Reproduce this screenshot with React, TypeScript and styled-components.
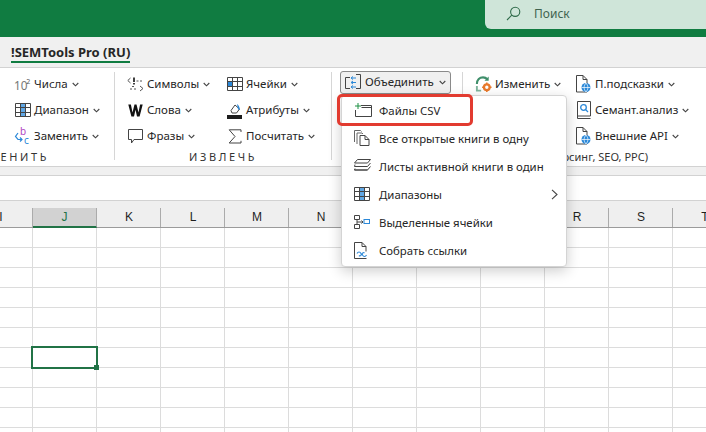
import React from "react";
import styled, { createGlobalStyle } from "styled-components";

const GlobalStyle = createGlobalStyle`
    html, body {
        margin: 0;
        padding: 0;
        background: #fff;
        overflow: hidden;
    }
    body {
        font-family: "Noto Sans", "Open Sans", sans-serif;
        color: #262626;
    }
`;

const Page = styled.div`
    position: relative;
    width: 706px;
    height: 432px;
    overflow: hidden;
    display: flex;
    flex-direction: column;
`;

const TitleBar = styled.div`
    height: 37px;
    flex: none;
    background: #107c41;
    display: flex;
    justify-content: flex-end;
    align-items: flex-start;
`;

const SearchBox = styled.div`
    width: 221px;
    height: 29px;
    background: #cfe5d9;
    border-bottom-left-radius: 6px;
    display: flex;
    align-items: center;
    gap: 13px;
    padding: 0 0 2px 21px;
    box-sizing: border-box;
    font-size: 12px;
    color: #41634f;
`;

const TabBar = styled.div`
    height: 31px;
    flex: none;
    box-sizing: border-box;
    background: #f0f0f0;
    border-bottom: 1px solid #d2d2d2;
    padding-left: 11px;
    display: flex;
`;

const Tab = styled.div`
    height: 24px;
    line-height: 30px;
    font-size: 13px;
    font-weight: 700;
    color: #262626;
    border-bottom: 2px solid #107c41;
    white-space: nowrap;
`;

const Ribbon = styled.div`
    height: 98px;
    flex: none;
    background: #fff;
    display: flex;
    box-sizing: border-box;
    padding-top: 3px;
`;

const Group = styled.div<{ $width: number; $pad: number }>`
    width: ${(p) => p.$width}px;
    flex: none;
    padding-left: ${(p) => p.$pad}px;
    box-sizing: border-box;
    display: flex;
    flex-direction: column;
    overflow: hidden;
`;

const Columns = styled.div`
    height: 78px;
    flex: none;
    display: flex;
`;

const Column = styled.div<{ $width: number }>`
    width: ${(p) => p.$width}px;
    flex: none;
    display: flex;
    flex-direction: column;
`;

const Separator = styled.div`
    width: 1px;
    height: 88px;
    margin-top: 1px;
    flex: none;
    background: #d6d6d6;
`;

const Item = styled.div`
    height: 26px;
    display: flex;
    align-items: center;
    gap: 3px;
    font-size: 11.5px;
    white-space: nowrap;
    color: #262626;
`;

const ItemText = styled.span`
    margin-top: -2px;
`;

const PressedItem = styled(Item)`
    width: 111px;
    height: 23px;
    box-sizing: border-box;
    padding-left: 3px;
    gap: 4px;
    background: #f0f0f0;
    border: 1px solid #8a8a8a;
    border-radius: 3px;
`;

const IconBox = styled.span`
    width: 17px;
    height: 18px;
    flex: none;
    display: flex;
    align-items: center;
    justify-content: center;
`;

const Caret = styled.svg`
    width: 7px;
    height: 5px;
    margin-left: 1px;
    flex: none;
`;

const GroupLabel = styled.div<{ $align: "center" | "end"; $inset?: number }>`
    height: 16px;
    line-height: 16px;
    padding-right: ${(p) => p.$inset ?? 0}px;
    display: flex;
    justify-content: ${(p) => p.$align};
    font-size: 11px;
    white-space: nowrap;
    color: #333;
`;

const Spaced = styled.span`
    letter-spacing: 2.6px;
`;

const StatusStrip = styled.div`
    height: 10px;
    flex: none;
    box-sizing: border-box;
    background: #f0f0f0;
    border-top: 1px solid #d2d2d2;
    border-bottom: 1px solid #d2d2d2;
`;

const FormulaBar = styled.div`
    height: 25px;
    flex: none;
    box-sizing: border-box;
    background: #fff;
    border-bottom: 1px solid #d2d2d2;
`;

const Sheet = styled.div`
    margin-left: -31px;
    display: flex;
    flex-direction: column;
`;

const HeaderRow = styled.div`
    height: 27px;
    flex: none;
    box-sizing: border-box;
    padding-top: 7px;
    background: #efefef;
    border-bottom: 1px solid #9b9b9b;
    display: flex;
`;

const HeaderCell = styled.div<{ $active?: boolean }>`
    width: 64px;
    flex: none;
    box-sizing: border-box;
    height: ${(p) => (p.$active ? 20 : 19)}px;
    padding-left: ${(p) => (p.$active ? 0 : 1)}px;
    text-align: center;
    font-family: "Liberation Sans", Arial, sans-serif;
    font-size: 12px;
    line-height: 19px;
    color: ${(p) => (p.$active ? "#217346" : "#1f1f1f")};
    background: ${(p) => (p.$active ? "#d2d2d2" : "transparent")};
    border-right: 1px solid #ababab;
    border-bottom: ${(p) => (p.$active ? "2px solid #217346" : "none")};
    overflow: hidden;
    white-space: nowrap;
`;

const SheetRow = styled.div`
    display: flex;
    flex: none;
    height: 20px;
`;

const Cell = styled.div<{ $selected?: boolean }>`
    position: relative;
    width: 64px;
    height: 20px;
    flex: none;
    box-sizing: border-box;
    border-right: 1px solid #dcdcdc;
    border-bottom: 1px solid #dcdcdc;

    ${(p) =>
        p.$selected &&
        `
        &::before {
            content: "";
            position: absolute;
            z-index: 2;
            left: -2px;
            top: -2px;
            width: 67px;
            height: 23px;
            box-sizing: border-box;
            border: 2px solid #217346;
        }
        &::after {
            content: "";
            position: absolute;
            z-index: 3;
            right: -3px;
            bottom: -3px;
            width: 5px;
            height: 5px;
            background: #217346;
        }
    `}
`;

const Menu = styled.div`
    position: absolute;
    z-index: 5;
    left: 341px;
    top: 95px;
    width: 226px;
    height: 172px;
    box-sizing: border-box;
    background: #fff;
    border: 1px solid #d4d4d4;
    border-radius: 4px;
    box-shadow: 0 4px 14px rgba(0, 0, 0, 0.2);
`;

const MenuRow = styled.div`
    position: relative;
    height: 28px;
    display: flex;
    align-items: center;
    font-size: 11.4px;
    color: #262626;
    white-space: nowrap;
`;

const MenuIcon = styled.span`
    width: 37px;
    padding-left: 12px;
    box-sizing: border-box;
    flex: none;
    display: flex;
    align-items: center;
`;

const Arrow = styled.svg`
    position: absolute;
    right: 8px;
    top: 9px;
    width: 7px;
    height: 11px;
`;

const Highlight = styled.div`
    position: absolute;
    left: -5px;
    top: -2px;
    width: 136px;
    height: 32px;
    box-sizing: border-box;
    border: 3px solid #e23b30;
    border-radius: 5px;
`;

const Chevron = () => (
    <Caret viewBox="0 0 7 5">
        <path d="M.7 1 3.5 3.8 6.3 1" fill="none" stroke="#444" strokeWidth="1.1" />
    </Caret>
);

const ink = "#444";
const blue = "#2b88d8";

const SearchIcon = () => (
    <svg width="15" height="15" viewBox="0 0 15 15" fill="none" stroke="#2f6b4a" strokeWidth="1.1">
        <circle cx="9.2" cy="5.8" r="4.6" />
        <path d="M5.8 9.2 1 14" />
    </svg>
);

const PowerIcon = () => (
    <svg width="18" height="18" viewBox="0 0 18 18">
        <text x="0" y="15" fontSize="12.5" fontFamily="Noto Sans" fill="#777">10</text>
        <text x="13" y="9" fontSize="7.5" fontFamily="Noto Sans" fill="#555">2</text>
    </svg>
);

const GridIcon = ({ fill }: { fill: string }) => (
    <svg width="16" height="14" viewBox="0 0 16 14">
        {fill === "column" && <rect x="5.5" y=".5" width="5" height="13" fill="#62a8e5" />}
        {fill === "corner" && <rect x=".5" y="4.5" width="5" height="5" fill={blue} />}
        <path
            d="M.5.5h15v13H.5zM5.5.5v13M10.5.5v13M.5 4.5h15M.5 9.5h15"
            fill="none"
            stroke="#444"
        />
    </svg>
);

const ReplaceIcon = () => (
    <svg width="17" height="20" viewBox="0 0 17 20">
        <text x="6" y="9" fontSize="10" fontFamily="Noto Sans" fill="#b146c2">b</text>
        <text x="10" y="18" fontSize="10" fontFamily="Noto Sans" fill={blue}>c</text>
        <path d="M4 7 1.500 10.500 4 13.500h4M6 11.500l2 2-2 2" fill="none" stroke={blue} strokeWidth="1.2" />
    </svg>
);

const SymbolsIcon = () => (
    <svg width="17" height="15" viewBox="0 0 17 15" fill="none" stroke="#555">
        <path d="M3.5 1 .8 3.5l2.7 2.5M13 9l3 2.5L13 14" />
        <path d="M7 .5v4.5" stroke="#111" strokeWidth="1.6" />
        <path d="M7 6v1.4" stroke="#111" strokeWidth="1.6" />
        <path d="M9.5 4h2M13 4h3M5 9.5h2M3 12h2M7 12h2" strokeDasharray="2 1" />
    </svg>
);

const WordIcon = () => (
    <svg width="15" height="13" viewBox="0 0 15 13">
        <path d="M.3.5h2.6l1.6 8 2-8h2l2 8 1.6-8h2.6L11.6 12.5H9L7.5 5.8 6 12.5H3.4z" fill="#111" />
    </svg>
);

const PhraseIcon = () => (
    <svg width="15" height="15" viewBox="0 0 15 15" fill="none" stroke="#444">
        <path d="M.5.5h14v10H6L3.5 14v-3.500H.5z" />
    </svg>
);

const FillIcon = () => (
    <svg width="17" height="17" viewBox="0 0 17 17">
        <path d="M5 8.500 9 3l4.500 4-3 4H6z" fill="#fff" stroke="#444" />
        <path d="M11 2c1.800 1 2.500 3 3 5.500h-2z" fill={blue} />
        <rect x="1" y="13" width="15" height="4" fill="#1c1c1c" />
    </svg>
);

const SumIcon = () => (
    <svg width="14" height="15" viewBox="0 0 14 15" fill="none" stroke="#444">
        <path d="M13 3V.8H1.200L7 7.500 1.200 14H13v-2.200" />
    </svg>
);

const MergeIcon = () => (
    <svg width="16" height="17" viewBox="0 0 16 17" fill="none" stroke="#444">
        <path d="M5 3.500H.5v11H5M11 .5h4.500v14H11" />
        <path d="M11 4H6.500M11 8.500H6.500M11 13H6.500M8 2.500 6 4l2 1.500M8 7 6 8.500l2 1.500M8 11.500 6 13l2 1.500" stroke={blue} />
    </svg>
);

const ChangeIcon = () => (
    <svg width="18" height="18" viewBox="0 0 18 18" fill="none">
        <path d="M2 9C2 4.500 5 2 8.500 2c2 0 3.500.8 4.500 2" stroke="#3f8f6b" strokeWidth="2.200" />
        <path d="M14.500 1v4.500H10z" fill="#3f8f6b" />
        <path d="M2 11v5h4.500" stroke="#7fb59d" strokeWidth="2" />
        <circle cx="12.500" cy="12.500" r="3" stroke="#e8792b" strokeWidth="2.400" />
        <path d="M12.500 7.500v2M12.500 15.500v2M7.500 12.500h2M15.500 12.500h2" stroke="#e8792b" strokeWidth="1.600" />
    </svg>
);

const DocGlobeIcon = () => (
    <svg width="15" height="18" viewBox="0 0 15 18">
        <path d="M.5.5h6.500l4 4v12.500H.5zM7 .5v4h4" fill="#fff" stroke="#444" />
        <circle cx="10" cy="12.500" r="4.500" fill={blue} />
        <path d="M5.500 12.500h9M10 8c-2.500 3-2.500 6 0 9M10 8c2.500 3 2.500 6 0 9" fill="none" stroke="#fff" strokeWidth=".7" />
    </svg>
);

const BookIcon = () => (
    <svg width="14" height="18" viewBox="0 0 14 18" fill="none">
        <path d="M.5 15V.5h13V15zM.5 15v2.500h13" stroke="#444" />
        <circle cx="6.500" cy="6.500" r="2.800" stroke={blue} strokeWidth="1.300" />
        <path d="m8.500 8.500 2.500 2.500" stroke={blue} strokeWidth="1.300" />
    </svg>
);

const NewFileIcon = () => (
    <svg width="18" height="14" viewBox="0 0 18 14" fill="none">
        <path d="M7 2.500h10.500v11H1.500V7" stroke="#444" />
        <path d="M7.500 4.500h10" stroke="#444" />
        <path d="M4 0v6M1 3h6" stroke="#1f9145" />
    </svg>
);

const CopiesIcon = () => (
    <svg width="16" height="16" viewBox="0 0 16 16" fill="none" stroke="#666">
        <path d="M.5 12V.5h6l1 1" />
        <path d="M3 14V3h5l1 1" />
        <path d="M6 5.500h5l4 4v6H6zM11 5.500v4h4" fill="#fff" stroke="#444" />
    </svg>
);

const LayersIcon = () => (
    <svg width="17" height="14" viewBox="0 0 17 14" fill="none" stroke="#444">
        <path d="M3.500.5h13l-3 3.500h-13z" />
        <path d="M1 5.500 .5 7.500h13l3-3.500M1 9.500.5 11h13l3-3.500" />
        <path d="M.5 11h13" />
    </svg>
);

const SelectedCellsIcon = () => (
    <svg width="16" height="14" viewBox="0 0 16 14" fill="none">
        <path d="M.5.5h5v4h-5zM.5 9.500h5v4h-5z" stroke="#444" />
        <path d="M3 4.500v5M3 7h6M7.500 5.500 9 7l-1.500 1.500" stroke="#444" />
        <rect x="10" y="4.500" width="5.500" height="4" stroke={blue} />
    </svg>
);

const LinksIcon = () => (
    <svg width="15" height="17" viewBox="0 0 15 17" fill="none">
        <path d="M.5 16.500V.5h7.500l4 4v5M8 .5v4h4" stroke="#444" />
        <path d="M3 11.500c1-2 3-2 4 0s-1 3-2 2M12.500 13c-1 2-3 2-4 0s1-3 2-2" stroke={blue} strokeWidth="1.100" />
        <path d="M.5 16.500h12" stroke="#444" />
    </svg>
);

type Entry = { icon: React.ReactNode; label: string };

const RibbonItem = ({ icon, label }: Entry) => (
    <Item>
        <IconBox>{icon}</IconBox>
        <ItemText>{label}</ItemText>
        <Chevron />
    </Item>
);

const leftColumn: Entry[] = [
    { icon: <PowerIcon />, label: "Числа" },
    { icon: <GridIcon fill="column" />, label: "Диапазон" },
    { icon: <ReplaceIcon />, label: "Заменить" },
];

const extractColumns: Entry[][] = [
    [
        { icon: <SymbolsIcon />, label: "Символы" },
        { icon: <WordIcon />, label: "Слова" },
        { icon: <PhraseIcon />, label: "Фразы" },
    ],
    [
        { icon: <GridIcon fill="corner" />, label: "Ячейки" },
        { icon: <FillIcon />, label: "Атрибуты" },
        { icon: <SumIcon />, label: "Посчитать" },
    ],
];

const rightColumn: Entry[] = [
    { icon: <DocGlobeIcon />, label: "П.подсказки" },
    { icon: <BookIcon />, label: "Семант.анализ" },
    { icon: <DocGlobeIcon />, label: "Внешние API" },
];

const menuItems: Entry[] = [
    { icon: <NewFileIcon />, label: "Файлы CSV" },
    { icon: <CopiesIcon />, label: "Все открытые книги в одну" },
    { icon: <LayersIcon />, label: "Листы активной книги в один" },
    { icon: <GridIcon fill="column" />, label: "Диапазоны" },
    { icon: <SelectedCellsIcon />, label: "Выделенные ячейки" },
    { icon: <LinksIcon />, label: "Собрать ссылки" },
];

const columns = ["I", "J", "K", "L", "M", "N", "O", "P", "Q", "R", "S", "T"];
const rows = Array.from({ length: 11 }, (_, i) => i);

const App = () => (
    <Page>
        <GlobalStyle />
        <TitleBar>
            <SearchBox>
                <SearchIcon />
                Поиск
            </SearchBox>
        </TitleBar>
        <TabBar>
            <Tab>!SEMTools Pro (RU)</Tab>
        </TabBar>
        <Ribbon>
            <Group $width={114} $pad={14}>
                <Columns>
                    <Column $width={100}>
                        {leftColumn.map((e) => (
                            <RibbonItem key={e.label} {...e} />
                        ))}
                    </Column>
                </Columns>
                <GroupLabel $align="end" $inset={65}>
                    <Spaced>ЗАМЕНИТЬ</Spaced>
                </GroupLabel>
            </Group>
            <Separator />
            <Group $width={216} $pad={12}>
                <Columns>
                    {extractColumns.map((col) => (
                        <Column $width={99} key={col[0].label}>
                            {col.map((e) => (
                                <RibbonItem key={e.label} {...e} />
                            ))}
                        </Column>
                    ))}
                </Columns>
                <GroupLabel $align="center" $inset={12}>
                    <Spaced>ИЗВЛЕЧЬ</Spaced>
                </GroupLabel>
            </Group>
            <Separator />
            <Group $width={130} $pad={8}>
                <Columns>
                    <Column $width={111}>
                        <PressedItem>
                            <IconBox>
                                <MergeIcon />
                            </IconBox>
                            <ItemText>Объединить</ItemText>
                            <Chevron />
                        </PressedItem>
                    </Column>
                </Columns>
            </Group>
            <Separator />
            <Group $width={243} $pad={12}>
                <Columns>
                    <Column $width={100}>
                        <RibbonItem icon={<ChangeIcon />} label="Изменить" />
                    </Column>
                    <Column $width={110}>
                        {rightColumn.map((e, i) => (
                            <RibbonItem key={i} {...e} />
                        ))}
                    </Column>
                </Columns>
                <GroupLabel $align="end" $inset={58}>
                    (Парсинг, SEO, PPC)
                </GroupLabel>
            </Group>
        </Ribbon>
        <StatusStrip />
        <FormulaBar />
        <Sheet>
            <HeaderRow>
                {columns.map((c) => (
                    <HeaderCell key={c} $active={c === "J"}>
                        {c}
                    </HeaderCell>
                ))}
            </HeaderRow>
            {rows.map((r) => (
                <SheetRow key={r}>
                    {columns.map((c) => (
                        <Cell key={c} $selected={c === "J" && r === 6} />
                    ))}
                </SheetRow>
            ))}
        </Sheet>
        <Menu>
            {menuItems.map((e, i) => (
                <MenuRow key={e.label}>
                    {i === 0 && <Highlight />}
                    <MenuIcon>{e.icon}</MenuIcon>
                    {e.label}
                    {i === 3 && (
                        <Arrow viewBox="0 0 7 11">
                            <path d="M1 .8 6 5.500 1 10.200" fill="none" stroke={ink} strokeWidth="1.100" />
                        </Arrow>
                    )}
                </MenuRow>
            ))}
        </Menu>
    </Page>
);

export default App;
